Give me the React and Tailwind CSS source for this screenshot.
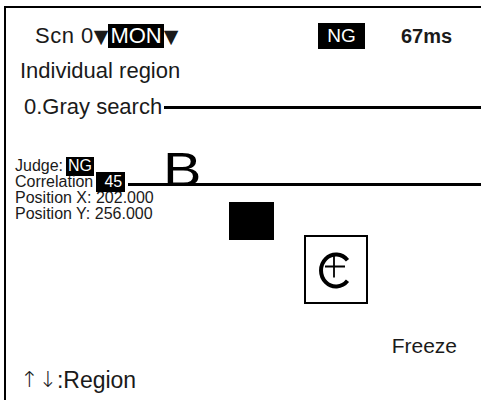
export default function App() {
  return (
    <div className="relative w-[481px] h-[400px] overflow-hidden bg-white text-[#1a1a1a] font-['Liberation_Sans',Arial,sans-serif]">
      <div className="ml-[4px] mt-[6px] h-[394px] border-l-2 border-t-2 border-black flex flex-col">
        {/* status row */}
        <div className="mt-[16px] flex h-[24px] items-center text-[22px] leading-[24px]">
          <div className="w-[312px] pl-[29px] flex items-center">
            <span className="tracking-[0.5px]">Scn 0</span>
            <span className="font-['DejaVu_Sans',sans-serif] text-[19px] leading-[24px]">▼</span>
            <span className="bg-black px-[2px] text-white">MON</span>
            <span className="font-['DejaVu_Sans',sans-serif] text-[19px] leading-[24px]">▼</span>
          </div>
          <div className="flex h-[26px] w-[47px] items-center justify-center bg-black text-[19px] text-white">NG</div>
          <div className="ml-[36px] text-[20px] font-bold">67ms</div>
        </div>

        <div className="mt-[11px] pl-[14px] text-[22px] leading-[24px]">Individual region</div>

        <div className="mt-[12px] flex h-[24px] items-center pl-[18px] text-[22px] leading-[24px]">
          <span>0.Gray search</span>
          <div className="ml-[2px] h-[3px] flex-1 bg-black" />
        </div>

        {/* measurement results */}
        <div className="mt-[39px] pl-[9px] text-[16px] leading-[16px]">
          <div className="flex h-[16px] items-center">
            <span>Judge:</span>
            <span className="ml-[3px] flex h-[19px] items-center bg-black px-[2px] text-white">NG</span>
          </div>
          <div className="flex h-[16px] items-center">
            <span>Correlation</span>
            <span className="relative z-10 ml-[3px] flex h-[20px] w-[29px] items-center justify-end bg-black pr-[3px] text-white">45</span>
          </div>
          <div className="h-[16px]">Position X: 202.000</div>
          <div className="h-[16px]">Position Y: 256.000</div>
        </div>

        <div className="mt-auto mb-[8px]">
          <div className="flex justify-end pr-[24px] text-[21px] leading-[24px]">Freeze</div>
          <div className="mt-[10px] flex items-end pl-[14px] text-[23px] leading-[24px]">
            <span className="font-['DejaVu_Sans',sans-serif] text-[22px] font-extralight leading-[24px]">↑</span>
            <span className="font-['DejaVu_Sans',sans-serif] text-[22px] font-extralight leading-[24px]">↓</span>
            <span>:Region</span>
          </div>
        </div>
      </div>

      {/* image overlay */}
      <div className="absolute left-[128px] top-[183px] h-[3px] w-[353px] bg-black" />
      <div className="absolute left-[163px] top-[146px] origin-left scale-x-[1.2] text-[48px] leading-[48px] text-black">B</div>
      <div className="absolute left-[229px] top-[202px] h-[38px] w-[45px] bg-black" />
      <div className="absolute left-[304px] top-[235px] flex h-[69px] w-[64px] items-center justify-center border-2 border-black">
        <svg width="40" height="40" viewBox="0 0 40 40" fill="none" stroke="black">
          <path d="M31.5 10.2 A15 16 0 1 0 31.5 30.8" strokeWidth="4" />
          <path d="M18 5.5 V27.5 M9 16.5 H29" strokeWidth="1.8" />
        </svg>
      </div>
    </div>
  )
}
